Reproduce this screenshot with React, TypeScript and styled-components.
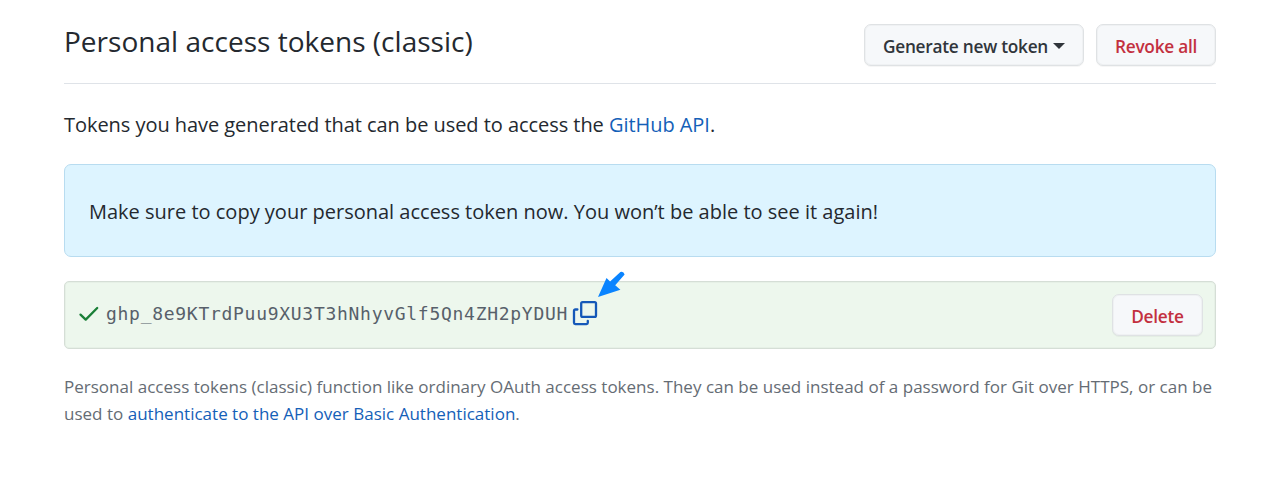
import React from "react";
import styled, { createGlobalStyle } from "styled-components";

const GlobalStyle = createGlobalStyle`
  * { box-sizing: border-box; }
  html, body { margin: 0; background: #fff; }
  body {
    color: #24292f;
    font-family: "Open Sans", "Noto Sans", sans-serif;
  }
`;

const Page = styled.main`
  width: 1152px;
  margin: 0 56px 0 64px;
  padding-top: 24px;
`;

const Header = styled.header`
  display: flex;
  align-items: flex-start;
  height: 60px;
  border-bottom: 1px solid #dfe3e8;
`;

const Title = styled.h1`
  flex: 1;
  margin: 0;
  font-size: 28px;
  font-weight: 400;
  line-height: 35px;
  letter-spacing: 0.02px;
  white-space: nowrap;
`;

const Actions = styled.div`
  display: flex;
  gap: 12px;
`;

const Button = styled.button<{ $danger?: boolean; $width: number }>`
  display: flex;
  align-items: center;
  justify-content: center;
  gap: 5px;
  width: ${(p) => p.$width}px;
  height: 42px;
  padding: 2px 0 0;
  border: 1px solid #dfe2e4;
  border-radius: 7px;
  background: #f6f8fa;
  box-shadow: 0 1px 0 rgba(27, 31, 36, 0.04), inset 0 0 0 1px rgba(27, 31, 36, 0.03);
  color: ${(p) => (p.$danger ? "#c3303f" : "#30353b")};
  font-family: inherit;
  font-size: 17.25px;
  font-weight: 600;
  letter-spacing: -0.25px;
  white-space: nowrap;
`;

const Caret = styled.span`
  border: 6px solid transparent;
  border-top-color: currentColor;
  border-bottom: 0;
`;

const Intro = styled.p`
  margin: 25px 0 23px;
  font-size: 20px;
  line-height: 32px;
  letter-spacing: -0.05px;
  white-space: nowrap;
`;

const Link = styled.a`
  color: #1460b8;
  text-decoration: none;
`;

const Notice = styled.section`
  display: flex;
  align-items: center;
  height: 93px;
  padding: 1px 24px 0;
  border: 1px solid #b8dcf0;
  border-radius: 7px;
  background: #ddf4ff;
  font-size: 20px;
  white-space: nowrap;
`;

const TokenRow = styled.section`
  display: flex;
  align-items: center;
  height: 68px;
  margin-top: 24px;
  padding: 0 12px 0 13px;
  border: 1px solid #d5ded6;
  border-radius: 5px;
  background: #edf7ed;
  box-shadow: inset 0 0 0 1px rgba(27, 31, 36, 0.03);
`;

const Check = styled.svg`
  width: 22px;
  height: 22px;
  margin-bottom: 2px;
`;

const Token = styled.code`
  flex: 0 0 auto;
  margin: 0 4px 3px 6px;
  color: #57606a;
  font-family: "DejaVu Sans Mono", monospace;
  font-size: 18px;
  line-height: 28px;
  letter-spacing: 0.714px;
`;

const CopyButton = styled.button`
  position: relative;
  display: flex;
  flex: 0 0 auto;
  padding: 0;
  margin: 0 auto 4px 0;
  border: 0;
  background: none;
`;

const Pointer = styled.svg`
  position: absolute;
  left: 24px;
  top: -31px;
`;

const Note = styled.p`
  margin: 24px 0 0;
  color: #656c74;
  font-size: 17px;
  line-height: 27px;
  letter-spacing: 0.01px;
  white-space: nowrap;
`;

export default function App() {
  return (
    <>
      <GlobalStyle />
      <Page>
        <Header>
          <Title>Personal access tokens (classic)</Title>
          <Actions>
            <Button $width={220}>
              Generate new token
              <Caret />
            </Button>
            <Button $danger $width={120}>Revoke all</Button>
          </Actions>
        </Header>
        <Intro>
          <span>Tokens you have generated that can be used to access the </span>
          <Link>GitHub API</Link>.
        </Intro>
        <Notice>
          <span>Make sure to copy your personal access token now. You won’t be able to see it again!</span>
        </Notice>
        <TokenRow>
          <Check viewBox="0 0 22 22" fill="none">
            <path d="M2.5 11.6l5.2 5L19.2 5" stroke="#1a7f37" strokeWidth="2.3" strokeLinecap="round" strokeLinejoin="round" />
          </Check>
          <Token>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</Token>
          <CopyButton aria-label="Copy token">
            <svg width="26" height="26" viewBox="0 0 26 26" fill="none" stroke="#1558b8" strokeWidth="2.3" strokeLinejoin="round" strokeLinecap="round">
              <rect x="9.2" y="2.2" width="14.8" height="14.6" rx="1.4" />
              <path d="M5.4 9.5H3.3a1.3 1.3 0 0 0-1.3 1.3v12a1.3 1.3 0 0 0 1.3 1.3h11.2a1.3 1.3 0 0 0 1.3-1.3v-2" />
            </svg>
            <Pointer width="30" height="30" viewBox="0 0 30 30">
              <path d="M2 28L10.5 9l3.6 3.6L24.4 3q3.2-1 4.2 2.4L19.2 16.2l5.2 4.6z" fill="#0a84ff" />
            </Pointer>
          </CopyButton>
          <Button $danger $width={91}>Delete</Button>
        </TokenRow>
        <Note>
          <span>Personal access tokens (classic) function like ordinary OAuth access tokens. They can be used instead of a password for Git over HTTPS, or can be</span>
          <br />
          <span>used to </span>
          <Link>authenticate to the API over Basic Authentication</Link>.
        </Note>
      </Page>
    </>
  );
}
